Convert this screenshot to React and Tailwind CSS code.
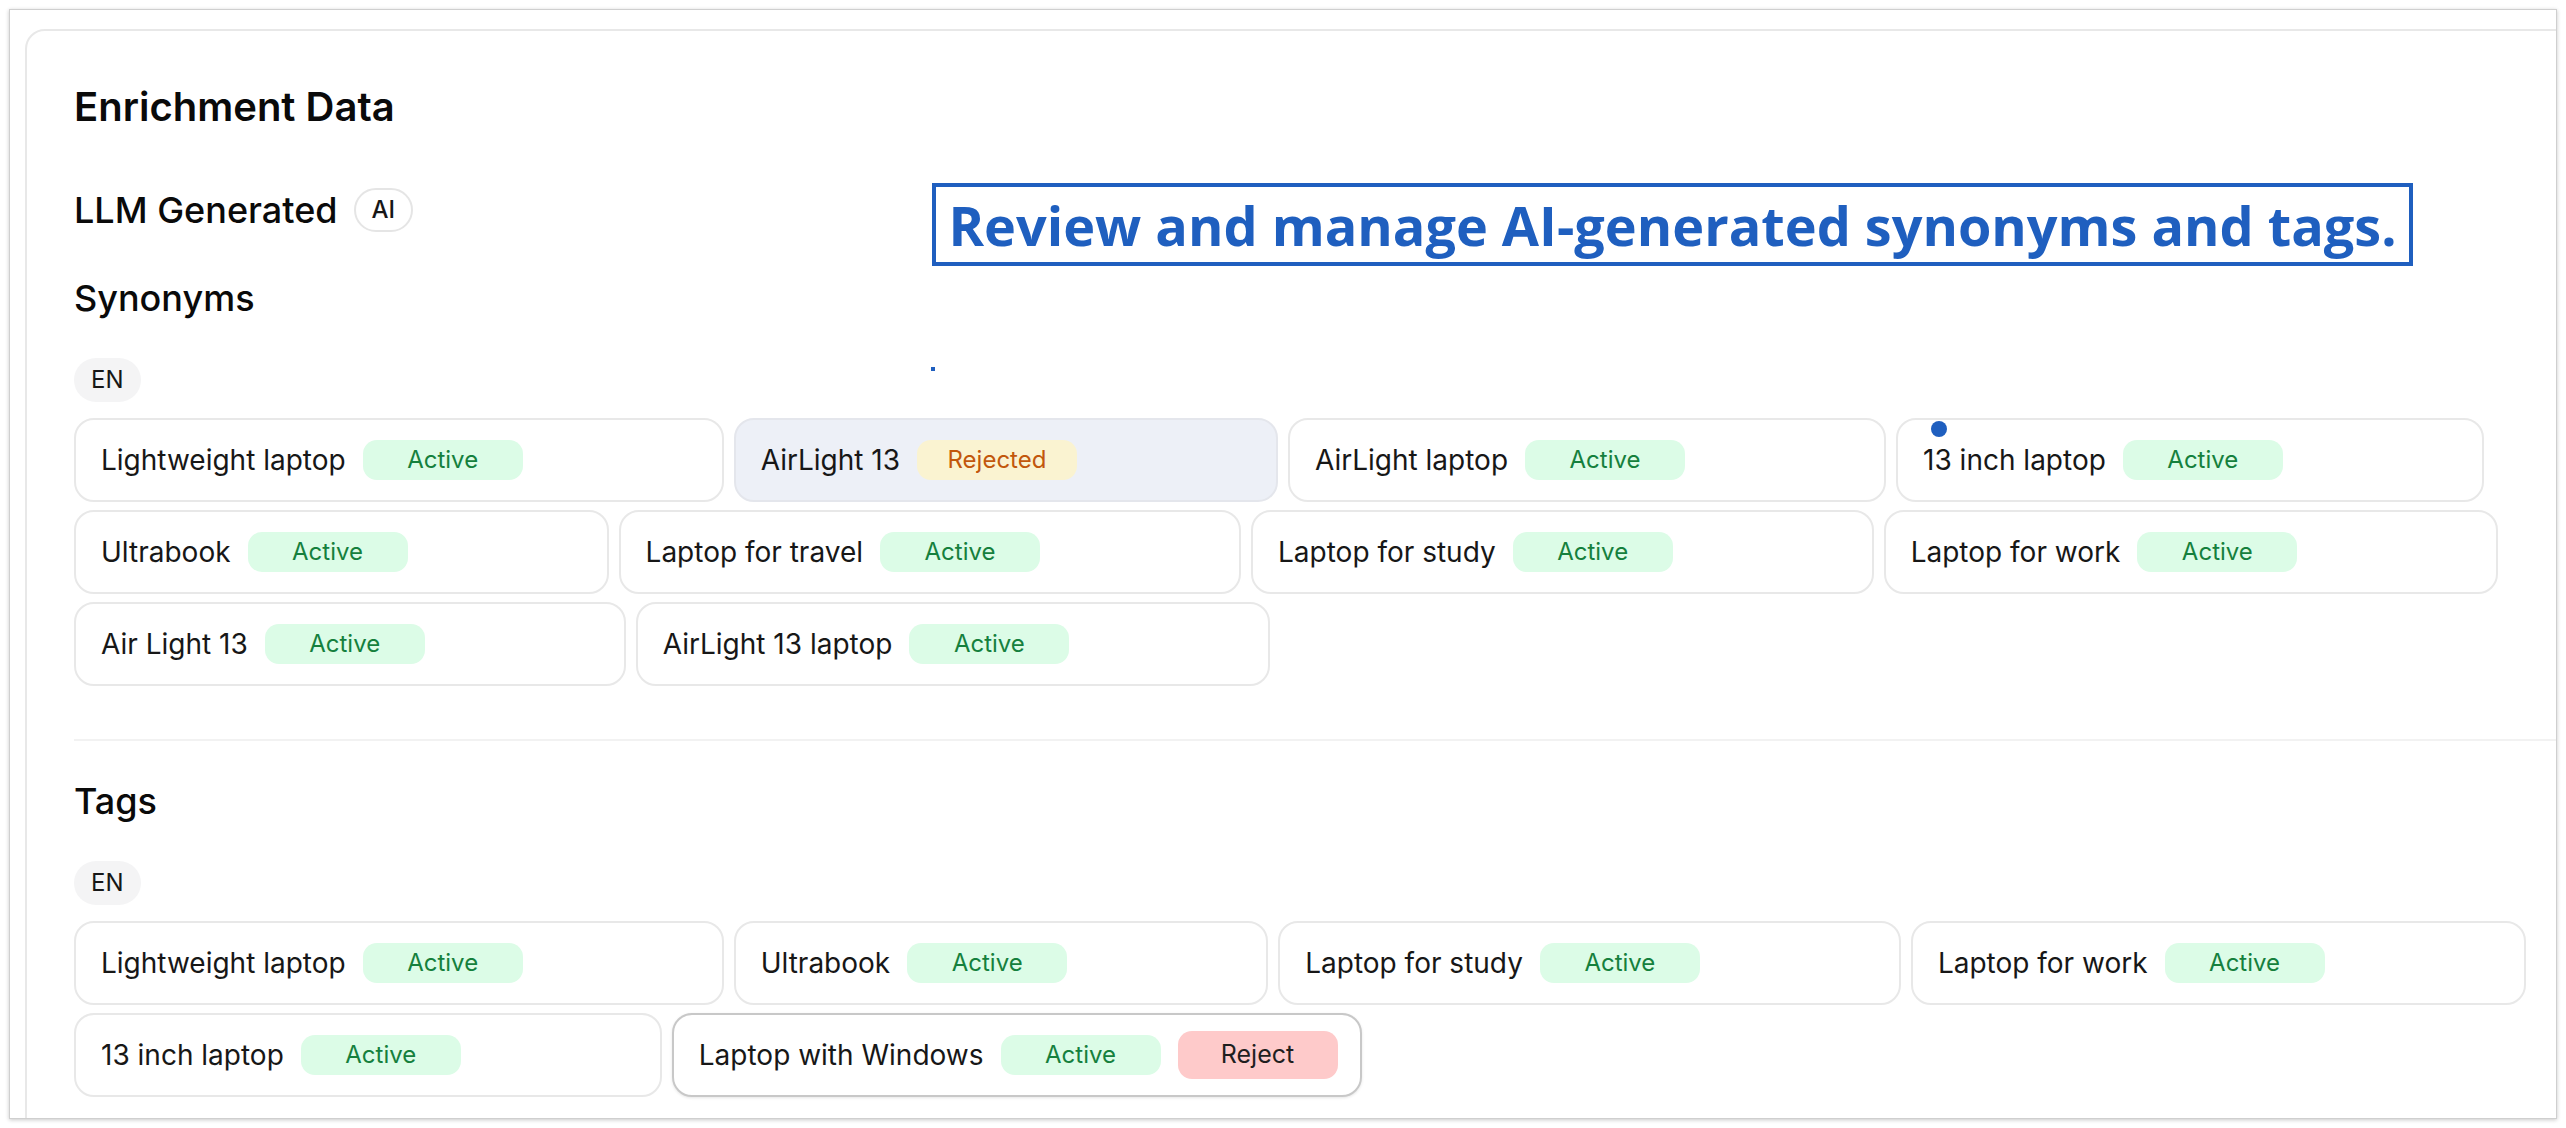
import React from 'react';

const synonyms = [
    { label: 'Lightweight laptop', status: 'active' },
    { label: 'AirLight 13', status: 'rejected' },
    { label: 'AirLight laptop', status: 'active' },
    { label: '13 inch laptop', status: 'active' },
    { label: 'Ultrabook', status: 'active' },
    { label: 'Laptop for travel', status: 'active' },
    { label: 'Laptop for study', status: 'active' },
    { label: 'Laptop for work', status: 'active' },
    { label: 'Air Light 13', status: 'active' },
    { label: 'AirLight 13 laptop', status: 'active' },
];

const tags = [
    { label: 'Lightweight laptop', status: 'active' },
    { label: 'Ultrabook', status: 'active' },
    { label: 'Laptop for study', status: 'active' },
    { label: 'Laptop for work', status: 'active' },
    { label: '13 inch laptop', status: 'active' },
    { label: 'Laptop with Windows', status: 'active', hover: true },
];

function StatusBadge({ status }) {
    if (status === 'rejected') {
        return (
            <span className="flex h-[40px] w-[160px] items-center justify-center rounded-[14px] bg-[#faf3d1] text-[24px] text-[#c2570c]">
                Rejected
            </span>
        );
    }
    return (
        <span className="flex h-[40px] w-[160px] items-center justify-center rounded-[14px] bg-[#dcfce7] text-[24px] text-[#15803d]">
            Active
        </span>
    );
}

function Chip({ label, status, hover }) {
    const rejected = status === 'rejected';
    return (
        <div
            className={
                'flex h-[84px] items-center gap-[17px] rounded-[20px] border-2 pl-[25px] pr-[22px] ' +
                (rejected ? 'border-[#e4e6ec] bg-[#edf0f7] ' : 'bg-white ') +
                (hover ? 'border-[#c8c8c8] shadow-[0_1px_3px_rgba(0,0,0,0.10)]' : rejected ? '' : 'border-[#e8e8e8]')
            }
        >
            <span className="text-[28px] text-[#171717]">{label}</span>
            <StatusBadge status={status} />
            {/* action only shows on hover */}
            <button
                type="button"
                className={
                    'flex h-[48px] w-[160px] items-center justify-center rounded-[14px] bg-[#fecaca] text-[25px] text-[#1f1f1f] ' +
                    (hover ? '' : 'invisible')
                }
            >
                {rejected ? 'Restore' : 'Reject'}
            </button>
        </div>
    );
}

function LangPill() {
    return (
        <span className="flex h-[44px] w-fit items-center rounded-full bg-[#f4f4f5] px-[17px] text-[24px] text-[#171717]">
            EN
        </span>
    );
}

function ChipList({ items }) {
    return (
        <div className="mt-[16px] flex flex-wrap gap-x-[10px] gap-y-[8px]">
            {items.map((item) => (
                <Chip key={item.label} {...item} />
            ))}
        </div>
    );
}

export default function App() {
    return (
        <div
            className="relative h-[1128px] w-[2566px] overflow-hidden bg-white pl-[9px] pt-[9px]"
            style={{ fontFamily: 'Inter, "Noto Sans", sans-serif' }}
        >
            <div className="h-[1110px] w-[2548px] overflow-hidden border border-[#cfcfcf] bg-white pl-[15px] pt-[19px] shadow-[0_1px_4px_rgba(0,0,0,0.22)]">
                <div className="w-[2660px] rounded-[20px] border-2 border-[#e8e8e8] pb-[60px] pl-[47px] pr-[60px] pt-[52px]">
                    <h2 className="text-[40px] font-semibold leading-[48px] text-[#0a0a0a]">Enrichment Data</h2>

                    <div className="mt-[57px] flex h-[44px] items-center gap-[16px]">
                        <span className="text-[36px] font-medium leading-[40px] text-[#0a0a0a]">LLM Generated</span>
                        <span className="flex h-[44px] items-center rounded-full border-2 border-[#e5e5e5] px-[16px] text-[24px] font-medium text-[#171717]">
                            AI
                        </span>
                    </div>

                    {/* Synonyms */}
                    <h3 className="mt-[46px] text-[36px] font-medium leading-[40px] text-[#0a0a0a]">Synonyms</h3>
                    <div className="mt-[40px]">
                        <LangPill />
                    </div>
                    <ChipList items={synonyms} />

                    <div className="mt-[53px] h-[2px] bg-[#f2f2f2]" />

                    {/* Tags */}
                    <h3 className="mt-[40px] text-[36px] font-medium leading-[40px] text-[#0a0a0a]">Tags</h3>
                    <div className="mt-[40px]">
                        <LangPill />
                    </div>
                    <ChipList items={tags} />
                </div>
            </div>

            {/* annotation overlay */}
            <div
                className="absolute left-[932px] top-[183px] flex h-[83px] w-[1481px] items-center justify-center border-4 border-[#1f5fbf] bg-white"
                style={{ fontFamily: '"Open Sans", "Noto Sans", sans-serif' }}
            >
                <span className="whitespace-nowrap text-[54px] font-bold leading-none text-[#1f5fbf]">
                    Review and manage AI-generated synonyms and tags.
                </span>
            </div>
            <div className="absolute left-[931px] top-[367px] h-[4px] w-[4px] bg-[#1f5fbf]" />
            <div className="absolute left-[1931px] top-[421px] h-[16px] w-[16px] rounded-full bg-[#1f5fbf]" />
        </div>
    );
}
